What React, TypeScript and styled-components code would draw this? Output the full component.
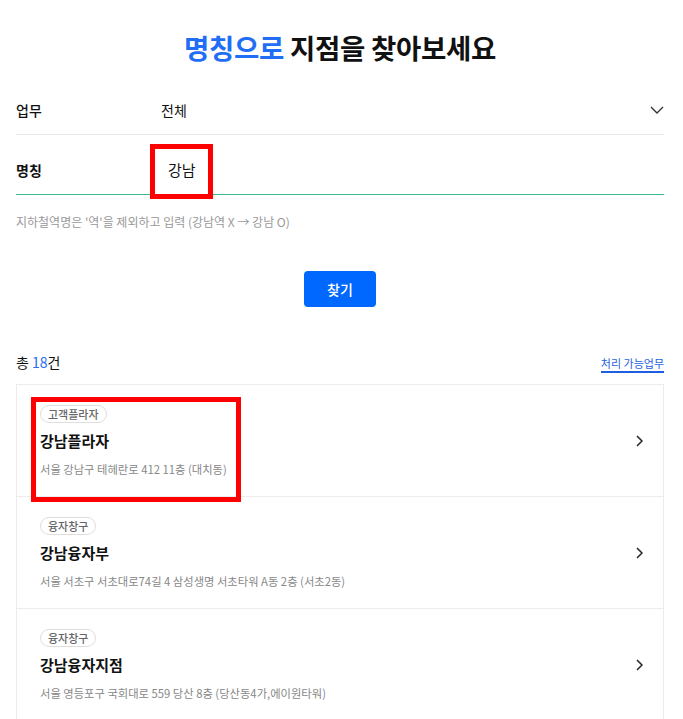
import styled, { createGlobalStyle } from 'styled-components';

const GlobalStyle = createGlobalStyle`
  html, body {
    margin: 0;
    padding: 0;
    background: #fff;
  }
  body {
    font-family: "Noto Sans CJK KR", "Noto Sans", sans-serif;
    color: #111;
  }
  * {
    box-sizing: border-box;
  }
`;

const Page = styled.main`
  width: 683px;
  padding: 30px 19px 0 16px;
`;

const Title = styled.h1`
  margin: 0;
  font-size: 27.5px;
  line-height: 34px;
  font-weight: 700;
  text-align: center;
  letter-spacing: -0.01em;
  color: #111;

  em {
    font-style: normal;
    color: #1f6ef5;
  }
`;

const Form = styled.div`
  margin-top: 21px;
`;

const FieldRow = styled.div<{ $active?: boolean }>`
  display: flex;
  align-items: center;
  height: ${(p) => (p.$active ? '60px' : '50px')};
  padding-top: ${(p) => (p.$active ? '10px' : '0')};
  border-bottom: 1px solid ${(p) => (p.$active ? '#3fb68c' : '#e6e6e6')};
`;

const Label = styled.span<{ $strong?: boolean }>`
  width: 145px;
  flex-shrink: 0;
  font-size: 14px;
  font-weight: ${(p) => (p.$strong ? 700 : 500)};
  color: #111;
`;

const Control = styled.div`
  position: relative;
  flex: 1;
  display: flex;
  align-items: center;
  justify-content: space-between;
  font-size: 14px;
`;

const InputValue = styled.span`
  padding-left: 7px;
  font-size: 15px;
  color: #111;
`;

const Highlight = styled.span<{ $top: number; $left: number; $w: number; $h: number }>`
  position: absolute;
  top: ${(p) => p.$top}px;
  left: ${(p) => p.$left}px;
  width: ${(p) => p.$w}px;
  height: ${(p) => p.$h}px;
  border: 5px solid #ff0000;
  z-index: 2;
  pointer-events: none;
`;

const Hint = styled.p`
  margin: 18px 0 0;
  font-size: 12px;
  line-height: 18px;
  color: #999;
`;

const ButtonWrap = styled.div`
  display: flex;
  justify-content: center;
  margin-top: 40px;
`;

const SearchButton = styled.button`
  width: 72px;
  height: 36px;
  border: none;
  border-radius: 4px;
  background: #0068ff;
  color: #fff;
  font-family: inherit;
  font-size: 14px;
  font-weight: 500;
`;

const ResultHeader = styled.div`
  display: flex;
  align-items: center;
  justify-content: space-between;
  margin-top: 44px;
  height: 22px;
`;

const Count = styled.span`
  font-size: 14px;
  color: #111;

  b {
    font-weight: 400;
    color: #2a6cf0;
  }
`;

const TaskLink = styled.a`
  font-size: 11px;
  line-height: 16px;
  color: #1d5fe0;
  text-decoration: none;
  border-bottom: 2px solid #1d5fe0;
  margin-top: 4px;
`;

const List = styled.ul`
  list-style: none;
  margin: 11px 0 0;
  padding: 0;
  border: 1px solid #ececec;
  border-bottom: none;
`;

const Item = styled.li`
  position: relative;
  display: flex;
  align-items: center;
  justify-content: space-between;
  height: 112px;
  padding: 0 20px 0 23px;
  border-bottom: 1px solid #ececec;
`;

const ItemBody = styled.div`
  display: flex;
  flex-direction: column;
  align-items: flex-start;
`;

const Tag = styled.span`
  display: inline-flex;
  align-items: center;
  height: 18px;
  padding: 0 7px;
  border: 1px solid #dedede;
  border-radius: 9px;
  font-size: 11px;
  font-weight: 500;
  color: #666;
`;

const ItemName = styled.strong`
  margin-top: 6px;
  font-size: 15px;
  line-height: 24px;
  font-weight: 700;
  color: #111;
`;

const Address = styled.span`
  margin-top: 8px;
  font-size: 11.3px;
  line-height: 16px;
  color: #888;
`;

const ChevronDown = () => (
  <svg width="14" height="8" viewBox="0 0 14 8" fill="none">
    <polyline points="1,1 7,7 13,1" stroke="#333" strokeWidth="1.4" />
  </svg>
);

const ChevronRight = () => (
  <svg width="7" height="12" viewBox="0 0 7 12" fill="none">
    <polyline points="1,1 6,6 1,11" stroke="#222" strokeWidth="1.5" />
  </svg>
);

const branches = [
  { tag: '고객플라자', name: '강남플라자', address: '서울 강남구 테헤란로 412 11층 (대치동)', marked: true },
  { tag: '융자창구', name: '강남융자부', address: '서울 서초구 서초대로74길 4 삼성생명 서초타워 A동 2층 (서초2동)' },
  { tag: '융자창구', name: '강남융자지점', address: '서울 영등포구 국회대로 559 당산 8층 (당산동4가,에이원타워)' },
];

export default function App() {
  return (
    <>
      <GlobalStyle />
      <Page>
        <Title>
          <em>명칭으로</em> 지점을 찾아보세요
        </Title>

        <Form>
          <FieldRow>
            <Label>업무</Label>
            <Control>
              <span>전체</span>
              <ChevronDown />
            </Control>
          </FieldRow>
          <FieldRow $active>
            <Label $strong>명칭</Label>
            <Control>
              <InputValue>강남</InputValue>
              <Highlight $top={-15} $left={-11} $w={63} $h={55} />
            </Control>
          </FieldRow>
        </Form>

        <Hint>지하철역명은 '역'을 제외하고 입력 (강남역 X → 강남 O)</Hint>

        <ButtonWrap>
          <SearchButton>찾기</SearchButton>
        </ButtonWrap>

        <ResultHeader>
          <Count>
            총 <b>18</b>건
          </Count>
          <TaskLink>처리 가능업무</TaskLink>
        </ResultHeader>

        <List>
          {branches.map((b) => (
            <Item key={b.name}>
              <ItemBody>
                <Tag>{b.tag}</Tag>
                <ItemName>{b.name}</ItemName>
                <Address>{b.address}</Address>
              </ItemBody>
              <ChevronRight />
              {b.marked && <Highlight $top={12} $left={14} $w={210} $h={105} />}
            </Item>
          ))}
        </List>
      </Page>
    </>
  );
}
